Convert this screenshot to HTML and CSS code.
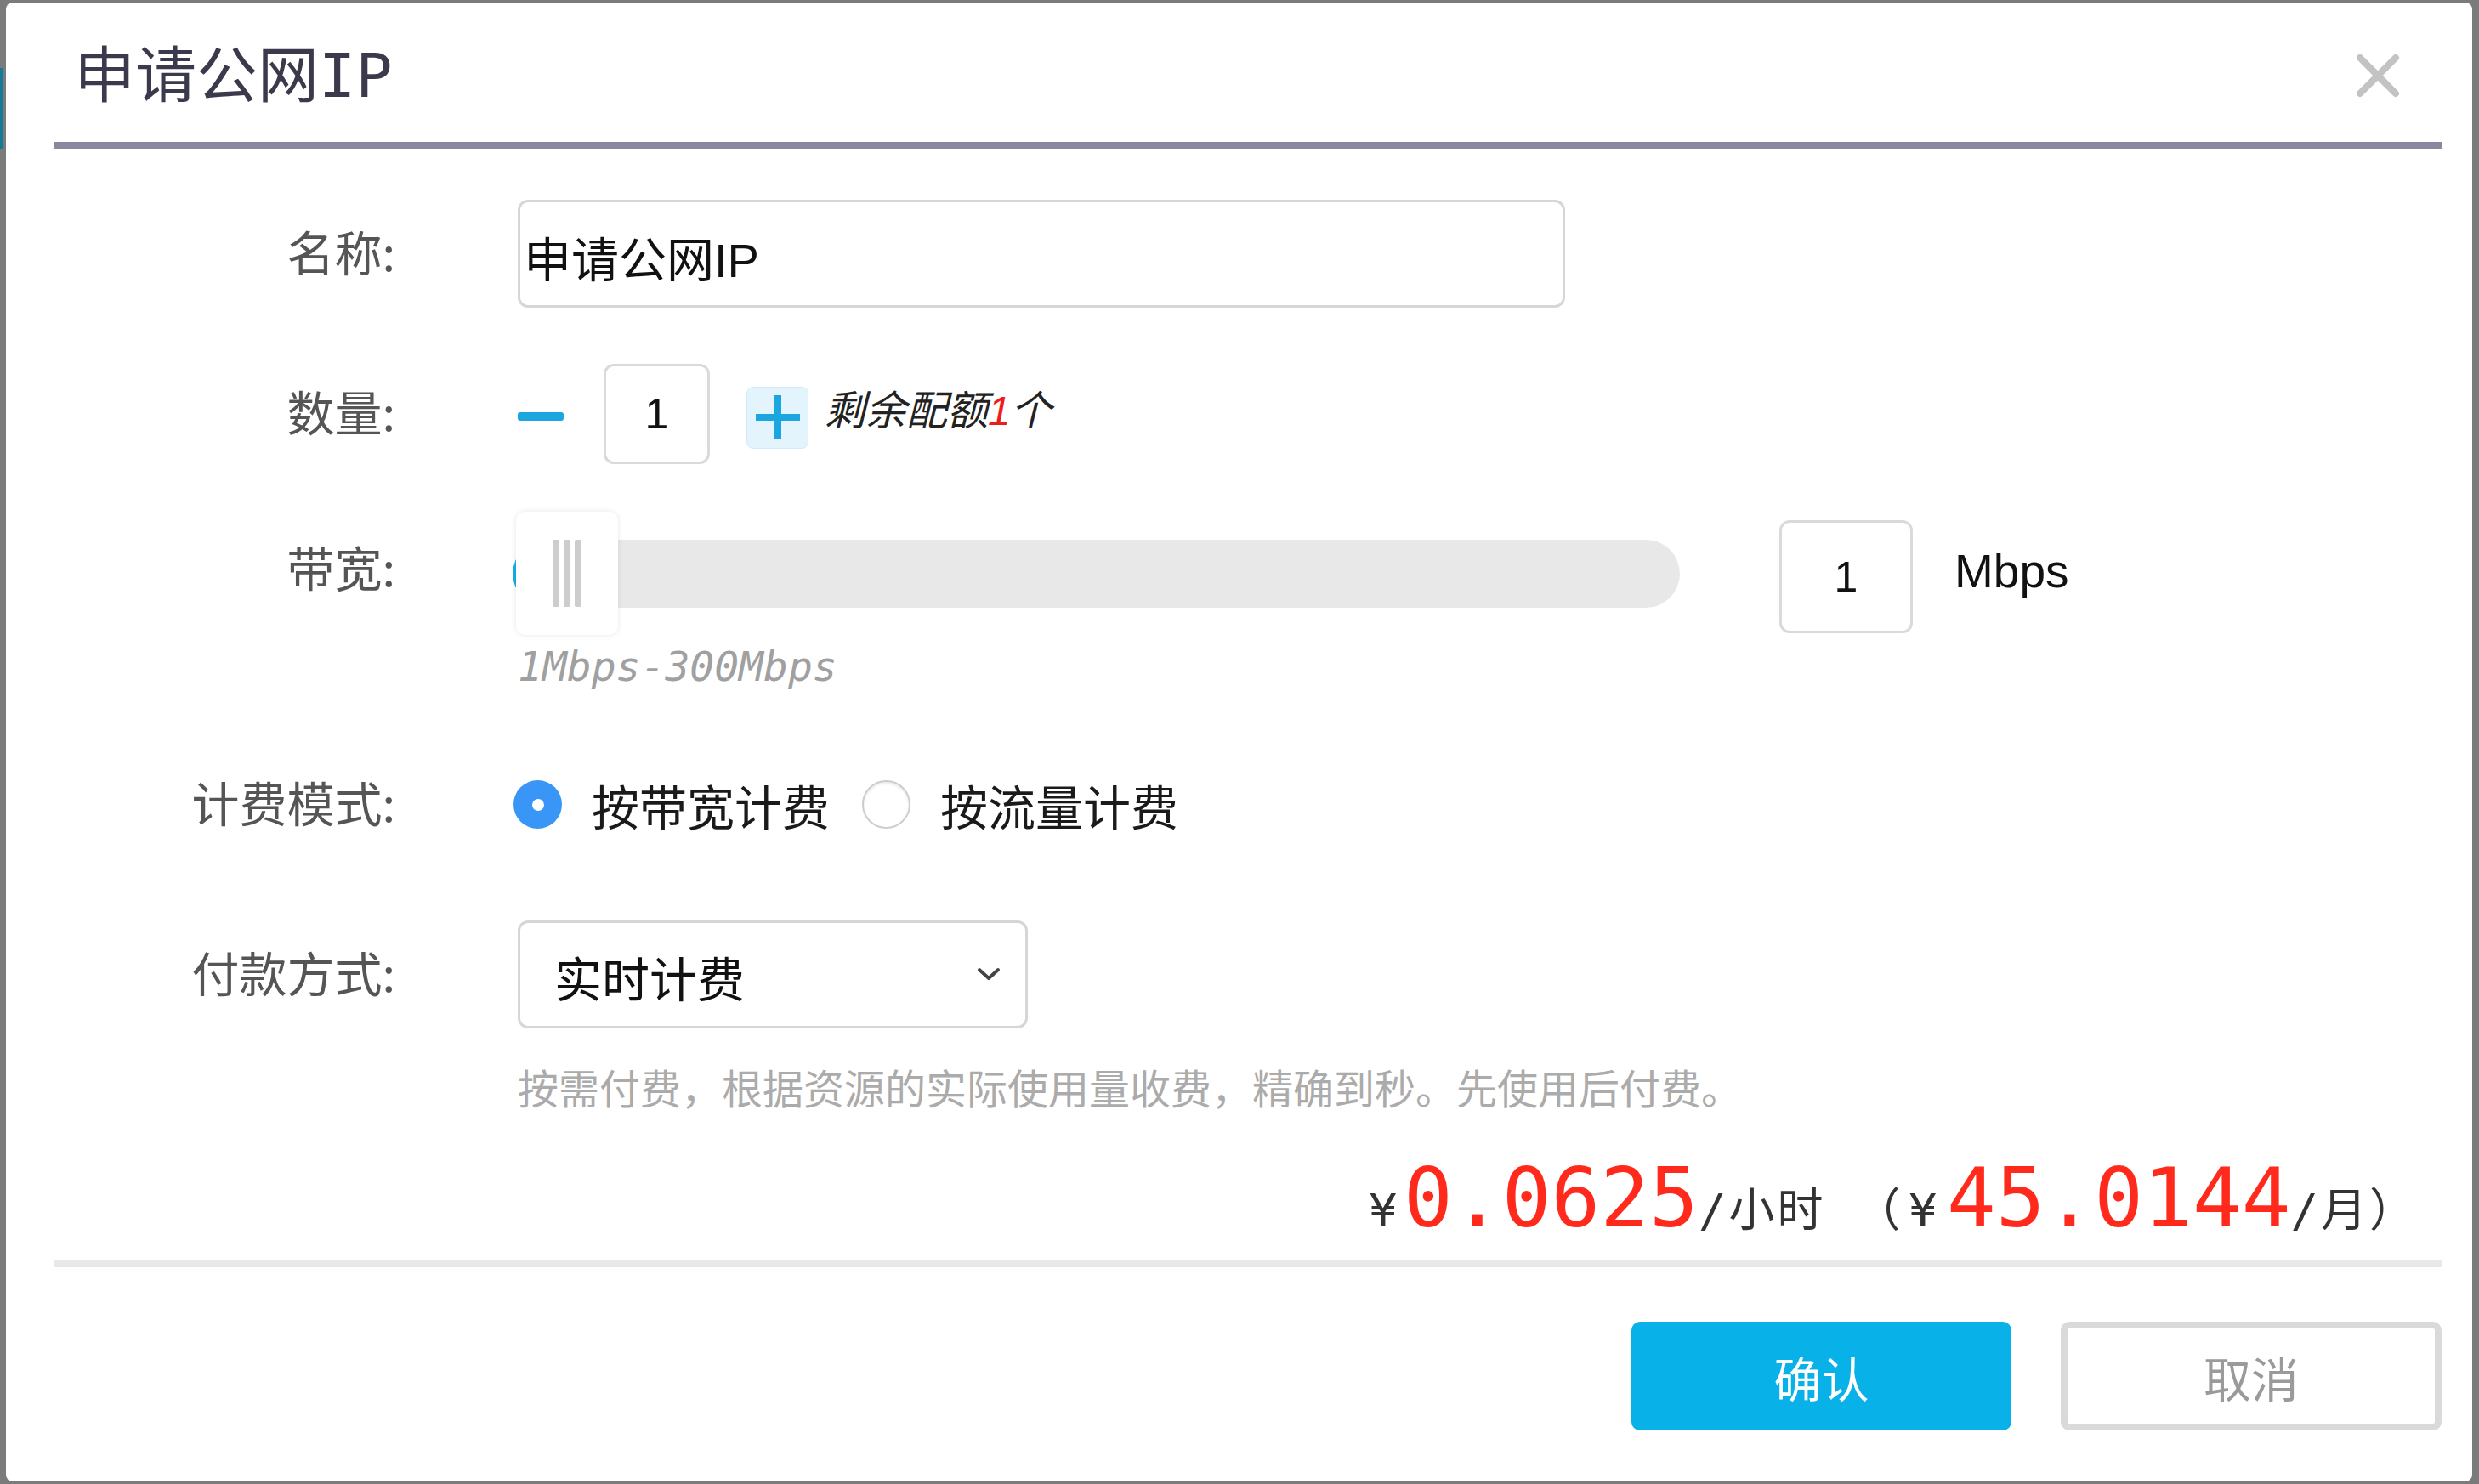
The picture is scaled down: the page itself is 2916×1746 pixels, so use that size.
FILE: index.html
```html
<!DOCTYPE html>
<html lang="zh-CN">
<head>
<meta charset="utf-8">
<title>申请公网IP</title>
<link rel="stylesheet" href="styles.css">
</head>
<body>
<div class="bg-accent"></div>
<div class="dialog">
  <div class="dlg-header">
    <h1 class="dlg-title">申请公网IP</h1>
    <span class="dlg-close">
      <svg viewBox="0 0 52 52" width="52" height="52"><path d="M5 5 L47 47 M47 5 L5 47" stroke="#c3c3c3" stroke-width="8" stroke-linecap="round" fill="none"/></svg>
    </span>
  </div>

  <div class="row row-name">
    <div class="label">名称:</div>
    <div class="ctrl"><div class="text-input">申请公网IP</div></div>
  </div>

  <div class="row row-qty">
    <div class="label">数量:</div>
    <div class="ctrl qty">
      <span class="minus"></span>
      <div class="num-box qty-box">1</div>
      <span class="plus-btn">
        <svg viewBox="0 0 54 54" width="54" height="54"><path d="M27 1 V53 M1 27 H53" stroke="#1ba6df" stroke-width="8" fill="none"/></svg>
      </span>
      <span class="quota">剩余配额<em>1</em>个</span>
    </div>
  </div>

  <div class="row row-bw">
    <div class="label">带宽:</div>
    <div class="ctrl bw-line">
      <div class="slider">
        <div class="track"><div class="fill"></div></div>
        <div class="handle"><span></span><span></span><span></span></div>
      </div>
      <div class="num-box bw-box">1</div>
      <span class="unit">Mbps</span>
    </div>
    <div class="range">1Mbps-300Mbps</div>
  </div>

  <div class="row row-mode">
    <div class="label">计费模式:</div>
    <div class="ctrl radios">
      <span class="radio on"></span><span class="opt">按带宽计费</span>
      <span class="radio off"></span><span class="opt">按流量计费</span>
    </div>
  </div>

  <div class="row row-pay">
    <div class="label">付款方式:</div>
    <div class="ctrl">
      <div class="select">
        <span>实时计费</span>
        <svg viewBox="0 0 30 18" width="30" height="18"><polyline points="4,4 15,14 26,4" stroke="#444" stroke-width="4" fill="none" stroke-linecap="round" stroke-linejoin="round"/></svg>
      </div>
    </div>
  </div>

  <div class="row row-help">
    <div class="label"></div>
    <div class="ctrl help">按需付费，根据资源的实际使用量收费，精确到秒。先使用后付费。</div>
  </div>

  <div class="price">
    <span class="small cur">¥</span><span class="big">0.0625</span><span class="small unit-s">/小时</span><span class="small paren cur2">（¥</span><span class="big">45.0144</span><span class="small unit-s">/月）</span>
  </div>

  <div class="divider"></div>

  <div class="footer">
    <button class="btn btn-ok">确认</button>
    <button class="btn btn-cancel">取消</button>
  </div>
</div>
</body>
</html>
```

FILE: styles.css
```css
html, body {
  margin: 0;
  padding: 0;
}
body {
  background: #7b7b7b;
  padding: 3px 8px 3px 7px;
  font-family: "Noto Sans CJK SC", sans-serif;
  position: relative;
}
.bg-accent {
  position: absolute;
  left: 0;
  top: 80px;
  width: 4px;
  height: 95px;
  background: #137a9c;
}
.dialog {
  width: 2901px;
  height: 1740px;
  box-sizing: border-box;
  background: #fff;
  border-radius: 8px;
  padding: 0 36px 60px 56px;
  display: flex;
  flex-direction: column;
}
.dlg-header {
  display: flex;
  align-items: center;
  justify-content: space-between;
  padding: 50px 0 42px;
  border-bottom: 8px solid #8a87a0;
}
.dlg-title {
  margin: 0 0 0 24px;
  font-family: "DejaVu Sans Mono", "Noto Sans CJK SC", monospace;
  font-weight: 400;
  font-size: 72px;
  line-height: 72px;
  color: #3b3a4c;
}
.dlg-close {
  display: block;
  width: 52px;
  height: 52px;
  margin-right: 49px;
}
.dlg-close svg { display: block; }

.row {
  display: grid;
  grid-template-columns: 402px 1fr;
  column-gap: 144px;
  align-items: center;
}
.label {
  text-align: right;
  font-size: 56px;
  line-height: 64px;
  color: #555;
  margin-top: -8px;
}
.ctrl {
  display: flex;
  align-items: center;
}

/* name */
.row-name { margin-top: 60px; }
.text-input {
  width: 1232px;
  height: 127px;
  box-sizing: border-box;
  border: 3px solid #d6d6d6;
  border-radius: 12px;
  padding: 6px 0 0 4px;
  display: flex;
  align-items: center;
  font-family: "Liberation Sans", "Noto Sans CJK SC", sans-serif;
  font-size: 56px;
  color: #111;
}

/* quantity */
.row-qty { margin-top: 66px; }
.minus {
  width: 54px;
  height: 10px;
  border-radius: 3px;
  background: #1ba6df;
  margin: 6px 47px 0 0;
}
.num-box {
  box-sizing: border-box;
  border: 3px solid #dadada;
  border-radius: 12px;
  display: flex;
  align-items: center;
  justify-content: center;
  font-family: "Liberation Sans", sans-serif;
  font-size: 50px;
  color: #111;
}
.qty-box {
  width: 125px;
  height: 118px;
}
.plus-btn {
  width: 73px;
  height: 73px;
  box-sizing: border-box;
  margin: 8px 0 0 43px;
  border-radius: 8px;
  background: #e4f4fc;
  border: 1px solid #d3ebf6;
  display: flex;
  align-items: center;
  justify-content: center;
}
.plus-btn svg { display: block; }
.quota {
  margin: -12px 0 0 19px;
  font-style: italic;
  font-size: 48px;
  line-height: 48px;
  color: #222;
}
.quota em {
  font-family: "Liberation Sans", sans-serif;
  color: #ee1c1c;
}

/* bandwidth */
.row-bw {
  margin-top: 56px;
  grid-template-rows: auto auto;
}
.row-bw .label { grid-row: 1; grid-column: 1; margin-top: -18px; }
.bw-line { grid-row: 1; grid-column: 2; }
.range {
  grid-row: 2;
  grid-column: 2;
  margin-top: 9px;
  font-family: "DejaVu Sans Mono", monospace;
  font-style: italic;
  font-size: 48px;
  line-height: 56px;
  color: #a0a0a0;
}
.slider {
  position: relative;
  width: 1373px;
  height: 145px;
  margin-left: -6px;
}
.track {
  position: absolute;
  left: 0;
  right: 0;
  top: 33px;
  height: 80px;
  border-radius: 40px;
  background: #e8e8e8;
  overflow: hidden;
}
.fill {
  width: 80px;
  height: 80px;
  border-radius: 40px;
  background: #17aee6;
}
.handle {
  position: absolute;
  left: 4px;
  top: 0;
  width: 120px;
  height: 145px;
  box-sizing: border-box;
  background: #fff;
  border-radius: 10px;
  box-shadow: 0 0 6px rgba(0, 0, 0, 0.10);
  display: flex;
  justify-content: flex-start;
  align-items: center;
  gap: 5px;
  padding-left: 43px;
}
.handle span {
  width: 8px;
  height: 79px;
  background: #cdcdcd;
  border-radius: 2px;
}
.bw-box {
  width: 157px;
  height: 133px;
  margin: 8px 0 0 117px;
}
.unit {
  margin: -6px 0 0 49px;
  font-family: "Liberation Sans", sans-serif;
  font-size: 55px;
  line-height: 64px;
  color: #111;
}

/* billing mode */
.row-mode { margin-top: 106px; }
.radios { margin-left: -5px; }
.radio {
  width: 57px;
  height: 57px;
  box-sizing: border-box;
  border-radius: 50%;
  flex: none;
}
.radio.on {
  background: #3a96f6;
  display: flex;
  align-items: center;
  justify-content: center;
}
.radio.on::after {
  content: "";
  width: 14px;
  height: 14px;
  border-radius: 50%;
  background: #fff;
}
.radio.off {
  border: 2px solid #cdcdcd;
  background: #fff;
  box-shadow: inset 0 2px 3px rgba(0, 0, 0, 0.08);
  margin-left: 38px;
}
.opt {
  margin-left: 35px;
  font-size: 56px;
  line-height: 57px;
  color: #1a1a1a;
}

/* payment */
.row-pay { margin-top: 108px; }
.select {
  width: 600px;
  height: 127px;
  box-sizing: border-box;
  border: 3px solid #d6d6d6;
  border-radius: 12px;
  padding: 4px 28px 0 40px;
  display: flex;
  align-items: center;
  justify-content: space-between;
  font-size: 56px;
  color: #111;
}
.select svg { display: block; margin-top: -6px; }

/* help */
.row-help { margin-top: 44px; }
.help {
  font-size: 48px;
  line-height: 48px;
  color: #ababab;
}

/* price */
.price {
  margin-top: 58px;
  display: flex;
  justify-content: flex-end;
  align-items: baseline;
  padding-right: 28px;
  font-family: "DejaVu Sans Mono", "Noto Sans CJK SC", monospace;
}
.price .small {
  font-size: 54px;
  line-height: 54px;
  color: #333;
}
.price .unit-s { letter-spacing: 3px; }
.price .cur { margin-right: 8px; }
.price .cur2 { margin-right: 2px; letter-spacing: 10px; }
.price .paren { margin-left: 34px; }
.price .big {
  font-size: 96px;
  line-height: 100px;
  color: #ff2a1c;
}

.divider {
  margin-top: 23px;
  height: 8px;
  background: #e8e8e8;
}

.footer {
  margin-top: 64px;
  display: flex;
  justify-content: flex-end;
  gap: 58px;
}
.btn {
  height: 128px;
  box-sizing: border-box;
  border-radius: 10px;
  font-family: "Noto Sans CJK SC", sans-serif;
  font-size: 56px;
  padding: 0;
  margin: 0;
}
.btn-ok {
  width: 447px;
  background: #08b2e8;
  border: none;
  color: #fff;
}
.btn-cancel {
  width: 448px;
  background: #fff;
  border: 8px solid #dadada;
  color: #9a9a9a;
}
```
